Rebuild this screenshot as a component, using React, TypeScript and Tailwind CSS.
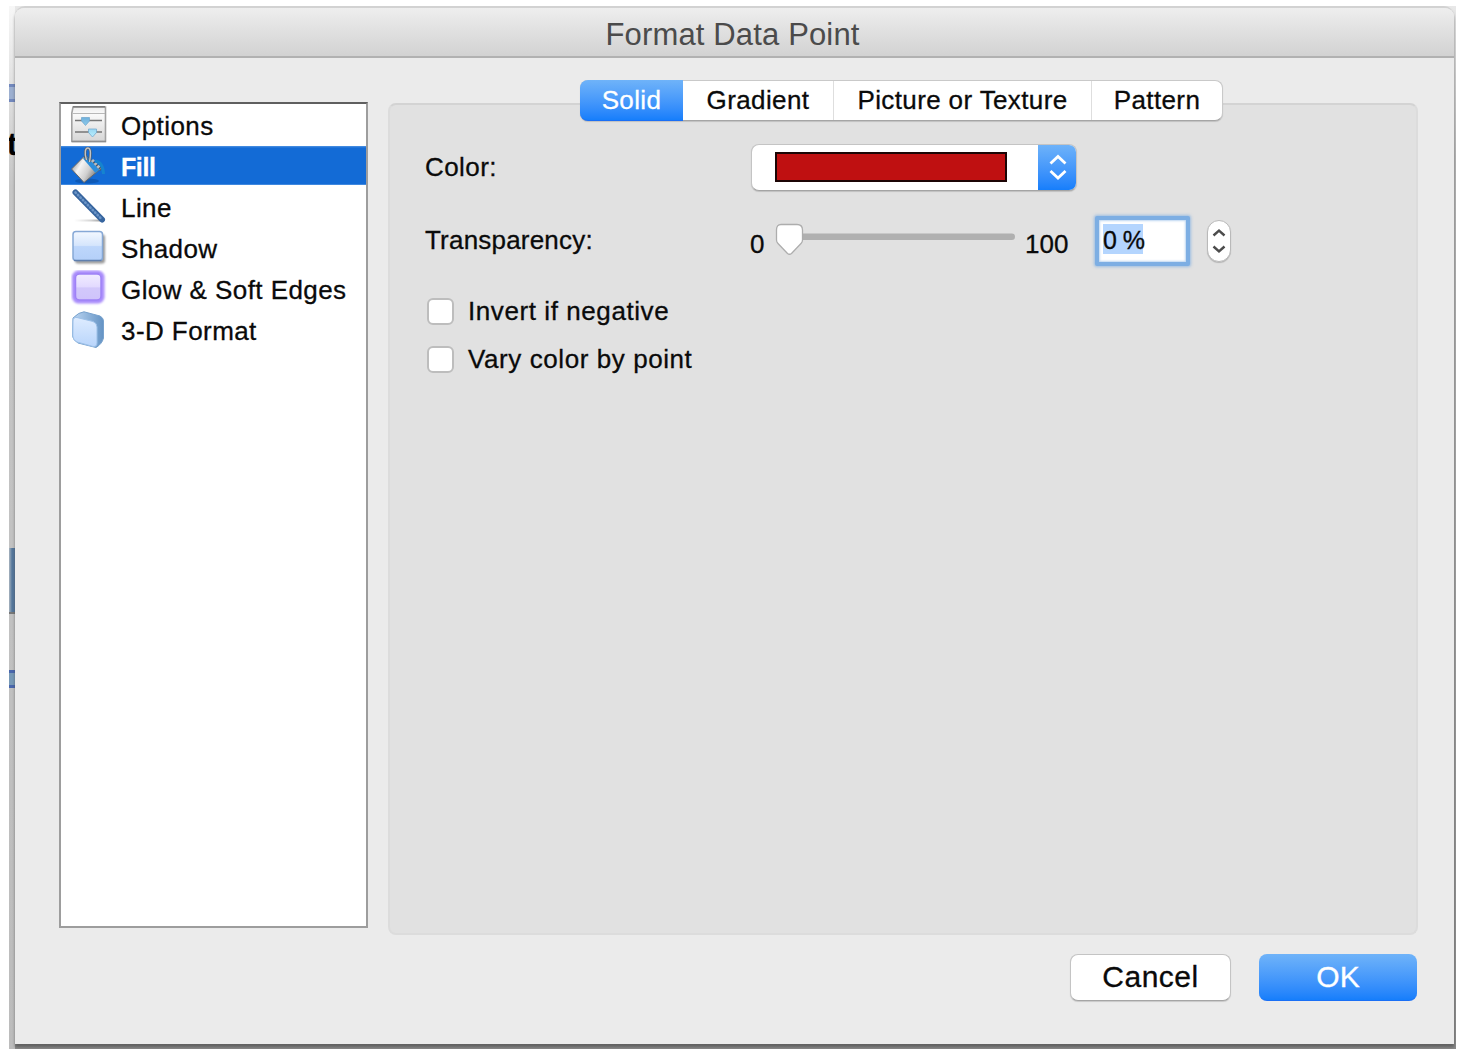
import React from "react";

function OptionsIcon() {
  return (
    <svg width="36" height="38" viewBox="0 0 36 38" className="block">
      <defs>
        <linearGradient id="opt" x1="0" y1="0" x2="0" y2="1">
          <stop offset="0" stopColor="#ececec" />
          <stop offset="0.2" stopColor="#fafafa" />
          <stop offset="1" stopColor="#d6d6d6" />
        </linearGradient>
        <linearGradient id="knob" x1="0" y1="0" x2="0" y2="1">
          <stop offset="0" stopColor="#6fb0dc" />
          <stop offset="1" stopColor="#b8f0ff" />
        </linearGradient>
      </defs>
      <path d="M2 1H34.500V35.500H.8V7z" fill="url(#opt)" stroke="#a2a2a2" strokeWidth="1.6" />
      <path d="M2 0.800H34" stroke="#7d7d7d" strokeWidth="1.6" />
      <path d="M1.500 7.500H34" stroke="#b8b8b8" strokeWidth="1" />
      <path d="M1 35.500H35" stroke="#8e8e8e" strokeWidth="1.500" />
      <path d="M4 14.500H31M4 26H31" stroke="#777" strokeWidth="1.700" />
      <path d="M10.500 11.500h8v3.500l-4 4.500-4-4.500zM17.500 23h8v3.500l-4 4.500-4-4.500z" fill="url(#knob)" stroke="#6ba3cc" strokeWidth="0.700" />
    </svg>
  );
}

function FillIcon() {
  return (
    <svg width="36" height="38" viewBox="0 0 36 38" className="block">
      <defs>
        <linearGradient id="bucket" x1="0" y1="0.200" x2="1" y2="0.700">
          <stop offset="0" stopColor="#8c8c8c" />
          <stop offset="0.300" stopColor="#f4f4f4" />
          <stop offset="0.600" stopColor="#cfcfcf" />
          <stop offset="1" stopColor="#5c5c5c" />
        </linearGradient>
      </defs>
      <ellipse cx="16" cy="34" rx="12" ry="2.500" fill="#0b4ca0" opacity="0.600" />
      <path d="M12.500 10L0.500 22L13 35.500L29.500 22z" fill="url(#bucket)" stroke="#686868" strokeWidth="1" />
      <path d="M14 9.500L30.500 22.500" stroke="#4d5a66" strokeWidth="3" />
      <path d="M12 11.500L24.500 26L28.500 22.500L16 9.500z" fill="#2b8edb" />
      <path d="M21 13L29.500 22" stroke="#b9bcc0" strokeWidth="3" strokeDasharray="2.500 1.500" />
      <path d="M15.500 13C13 5 14.500 0.800 17 1C20.500 1.500 19.500 9 18.500 15" fill="none" stroke="#4f5f70" strokeWidth="2.800" />
      <path d="M15.500 13C13 5 14.500 0.800 17 1C20.500 1.500 19.500 9 18.500 15" fill="none" stroke="#c4c4c4" strokeWidth="1.400" />
      <path d="M24 14Q32 15 32.500 27" fill="none" stroke="#1584cf" strokeWidth="3" />
    </svg>
  );
}

function LineIcon() {
  return (
    <svg width="36" height="38" viewBox="0 0 36 38" className="block">
      <defs>
        <linearGradient id="ls" x1="0" y1="0" x2="1" y2="0">
          <stop offset="0" stopColor="#bbb" stopOpacity="0" />
          <stop offset="0.600" stopColor="#aaa" stopOpacity="0.500" />
          <stop offset="1" stopColor="#999" />
        </linearGradient>
      </defs>
      <rect x="3" y="31.500" width="28" height="2" fill="url(#ls)" />
      <path d="M4.500 4.500L31 31.500" stroke="#37659f" strokeWidth="6" strokeLinecap="round" />
      <path d="M4.500 4.500L31 31.500" stroke="#6b94c6" strokeWidth="2.600" strokeLinecap="round" strokeDasharray="0.500 3" />
    </svg>
  );
}

function ShadowIcon() {
  return (
    <svg width="36" height="38" viewBox="0 0 36 38" className="block">
      <defs>
        <linearGradient id="sh" x1="0" y1="0" x2="0" y2="1">
          <stop offset="0" stopColor="#f3f8ff" />
          <stop offset="0.480" stopColor="#d5e5fc" />
          <stop offset="0.520" stopColor="#bdd6fb" />
          <stop offset="1" stopColor="#b4d0f9" />
        </linearGradient>
        <filter id="shb" x="-20%" y="-20%" width="140%" height="140%">
          <feGaussianBlur stdDeviation="1.300" />
        </filter>
      </defs>
      <rect x="4" y="5.500" width="30" height="29" rx="3" fill="#555" opacity="0.600" filter="url(#shb)" />
      <rect x="2" y="2.500" width="29.500" height="29" rx="3" fill="url(#sh)" stroke="#86a8d6" strokeWidth="1.500" />
      <path d="M3 31.500H30.500" stroke="#5f7fae" strokeWidth="1.300" />
    </svg>
  );
}

function GlowIcon() {
  return (
    <svg width="36" height="38" viewBox="0 0 36 38" className="block">
      <defs>
        <linearGradient id="gl" x1="0" y1="0" x2="0" y2="1">
          <stop offset="0" stopColor="#f1ecff" />
          <stop offset="0.480" stopColor="#e3dbff" />
          <stop offset="0.540" stopColor="#d2c8fb" />
          <stop offset="1" stopColor="#cfc3fb" />
        </linearGradient>
        <filter id="glb" x="-20%" y="-20%" width="140%" height="140%">
          <feGaussianBlur stdDeviation="0.900" />
        </filter>
      </defs>
      <rect x="2.500" y="2" width="29.500" height="30" rx="5" fill="#a98cfb" stroke="#a98cfb" strokeWidth="3" filter="url(#glb)" />
      <rect x="4.500" y="4" width="25.500" height="26" rx="4" fill="url(#gl)" stroke="#9f82f6" strokeWidth="1.500" />
    </svg>
  );
}

function FormatIcon() {
  return (
    <svg width="36" height="38" viewBox="0 0 36 38" className="block">
      <defs>
        <linearGradient id="fr" x1="0" y1="0" x2="0" y2="1">
          <stop offset="0" stopColor="#deecff" />
          <stop offset="1" stopColor="#b9d5fb" />
        </linearGradient>
        <linearGradient id="side" x1="0" y1="0" x2="1" y2="0">
          <stop offset="0" stopColor="#bcd6f2" />
          <stop offset="1" stopColor="#6493c4" />
        </linearGradient>
      </defs>
      <path d="M2 7Q8 1 13 0.800L29 5Q32.500 7 32.500 10V27Q31 33 25 36.500L7 32Q2 29 1.500 25z" fill="url(#side)" stroke="#78a2cd" strokeWidth="1" />
      <path d="M2 10Q2 6 6 6.500L22 10.500Q26 12 26 16V32Q26 36 22 35.500L6 31Q1.800 29 1.800 25z" fill="url(#fr)" stroke="#9cc0e8" strokeWidth="1" />
    </svg>
  );
}

const items = [
  { label: "Options", icon: <OptionsIcon /> },
  { label: "Fill", icon: <FillIcon /> },
  { label: "Line", icon: <LineIcon /> },
  { label: "Shadow", icon: <ShadowIcon /> },
  { label: "Glow & Soft Edges", icon: <GlowIcon /> },
  { label: "3-D Format", icon: <FormatIcon /> },
];

function Sidebar() {
  return (
    <div className="ml-11 mt-[44px] h-[826px] w-[309px] shrink-0 border-2 border-[#9d9d9d] border-t-[#5f5f5f] bg-white">
      {items.map((it, i) => (
        <div
          key={it.label}
          className={
            i === 1
              ? "flex h-[41px] items-center bg-[linear-gradient(#fff_1px,#4f93e3_1px,#136bd6_3px,#136bd6_39px,#6ba5e8_40px,#fff_40px)] pl-[10px] font-bold text-white"
              : "flex h-[41px] items-center pl-[10px]"
          }
        >
          {it.icon}
          <span className={i === 1 ? "ml-[14px] mt-[3px] text-[25px] tracking-[-0.4px]" : "ml-[14px] mt-[2px] tracking-[0.43px]"}>{it.label}</span>
        </div>
      ))}
    </div>
  );
}

function Tabs() {
  return (
    <div className="-mt-[25px] ml-[190px] flex h-[41px] w-[643px] rounded-[8px] border border-[#c9c9c9] border-b-[#a5a5a5] bg-white leading-[38px] tracking-[0.38px] shadow-[0_1px_1px_rgba(0,0,0,0.15)]">
      <div className="-my-px -ml-px w-[103px] rounded-l-[8px] border-b border-[#1a6ff5] bg-gradient-to-b from-[#6fb3f9] to-[#157efb] text-center leading-[40px] text-white">Solid</div>
      <div className="w-[151px] border-r border-[#dedede] text-center">Gradient</div>
      <div className="w-[258px] border-r border-[#dedede] text-center">Picture or Texture</div>
      <div className="flex-1 text-center">Pattern</div>
    </div>
  );
}

function ColorPopup() {
  return (
    <div className="flex h-[47px] w-[326px] overflow-hidden rounded-[8px] border border-[#c4c4c4] border-b-[#a4a4a4] bg-white shadow-[0_1px_1px_rgba(0,0,0,0.15)]">
      <div className="ml-[23px] mt-[7px] h-[30px] w-[232px] border-2 border-[#1c0505] bg-[#bf1011]" />
      <div className="-my-px -mr-px ml-auto flex w-[39px] items-center justify-center border-b border-[#1a6ff5] bg-gradient-to-b from-[#6fb3f9] to-[#157efb]">
        <svg width="18" height="28" viewBox="0 0 18 28" fill="none" stroke="white" strokeWidth="2.800">
          <path d="M1.500 10.500L9 3.500L16.500 10.500M1.500 18L9 25L16.500 18" />
        </svg>
      </div>
    </div>
  );
}

function Checkbox({ label }: { label: string }) {
  return (
    <div className="flex h-[48px] items-center">
      <div className="ml-[2px] h-[27px] w-[27px] rounded-[6px] border-2 border-[#bdbdbd] bg-white" />
      <span className="ml-[14px] tracking-[0.58px]">{label}</span>
    </div>
  );
}

function Panel() {
  return (
    <div className="ml-5 mt-[45px] h-[832px] w-[1030px] rounded-[8px] border-2 border-[#dcdcdc] border-t-[#d3d3d3] bg-[#e1e1e1]">
      <Tabs />
      <div className="ml-[35px] tracking-[0.43px]">
        <div className="mt-[23px] flex h-[47px] items-center">
          <span className="-mt-[2px] w-[326px]">Color:</span>
          <ColorPopup />
        </div>
        <div className="mt-[23px] flex h-[54px] items-center">
          <span className="-mt-[2px] w-[325px] tracking-[0.2px]">Transparency:</span>
          <span className="mt-[5px] w-[25px]">0</span>
          <svg width="242" height="36" viewBox="0 0 242 36" className="block shrink-0">
            <rect x="4" y="10.500" width="236" height="6.500" rx="3.200" fill="#b0b0b0" />
            <path d="M6 1.500H22Q27.500 1.500 27.500 7V17Q27.500 19 26 20.500L16.500 30.500Q14.500 32 12.500 30.500L3 20.500Q1.500 19 1.500 17V7Q1.500 1.500 6 1.500z" fill="white" stroke="#adadad" strokeWidth="1.300" />
          </svg>
          <span className="ml-[8px] mt-[5px] w-[70px] tracking-[0.1px]">100</span>
          <div className="flex h-[50px] w-[95px] shrink-0 items-start rounded-[2px] border-[4px] border-[#7daee3] bg-white pl-[4px] pt-[4px] shadow-[0_0_3px_1px_rgba(125,174,227,0.7),inset_0_0_2px_1px_rgba(125,174,227,0.5)]">
            <span className="h-[30px] w-[40px] whitespace-nowrap bg-[#b4d5fe] text-[25px] leading-[32px] tracking-[-0.5px]">0 %</span>
          </div>
          <div className="ml-[17px] flex h-[42px] w-[24px] shrink-0 items-center justify-center rounded-full border border-[#b9b9b9] bg-white shadow-[0_1px_1px_rgba(0,0,0,0.2)]">
            <svg width="14" height="28" viewBox="0 0 14 28" fill="none" stroke="#4c4c4c" strokeWidth="2.400">
              <path d="M1.500 8.500L7 3.500L12.500 8.500M1.500 19.500L7 24.500L12.500 19.500" />
            </svg>
          </div>
        </div>
        <div className="mt-[19px]">
          <Checkbox label="Invert if negative" />
          <Checkbox label="Vary color by point" />
        </div>
      </div>
    </div>
  );
}

function Backdrop() {
  return (
    <div className="flex h-full w-[6px] shrink-0 flex-col overflow-hidden bg-[linear-gradient(#f7f7f7_0px,#dedede_90px,#c6c6c6_180px,#bcbcbc_100%)]">
      <div className="mt-[78px] h-[18px] border-y-[3px] border-[#7288bd] bg-[#9cafd0]" />
      <div className="mt-[25px] h-[35px] -translate-x-[2px] text-[31px] font-bold leading-[35px] text-black">t</div>
      <div className="mt-[386px] h-[66px] border-b-2 border-[#777] bg-[linear-gradient(90deg,#a9b4be,#54779c_50%)]" />
      <div className="mt-[56px] h-[18px] border-y-[3px] border-[#4967ad] bg-[#7799b7]" />
    </div>
  );
}

export default function App() {
  return (
    <div className="h-[1060px] w-[1466px] overflow-hidden bg-white pl-[9px] pt-[6px] font-['Liberation_Sans',Arial,sans-serif] text-[26px] leading-none text-[#0a0a0a] [-webkit-text-stroke:0.3px_currentColor]">
      <div className="flex h-[1043px] w-[1447px] overflow-hidden bg-[linear-gradient(#e8e8e8,#b5b5b5_15%,#8a8a8a)]">
        <Backdrop />
        <div className="h-[1038px] w-[1439px] shrink-0 overflow-hidden rounded-t-[10px] border-t-2 border-[#d2d2d2] bg-[#ebebeb] shadow-[0_3px_3px_0px_rgba(70,70,70,0.6)]">
          <div className="h-[50px] border-b-2 border-[#b1b1b1] bg-gradient-to-b from-[#eeeeee] to-[#d2d2d2] text-center text-[31px] leading-[54px] tracking-[0.15px] text-[#4b4b4b] [-webkit-text-stroke:0px]">
            <span className="relative -left-[2px]">Format Data Point</span>
          </div>
          <div className="flex">
            <Sidebar />
            <Panel />
          </div>
          <div className="mt-[19px] flex h-[47px] justify-end gap-[28px] pr-[37px] text-[30px]">
            <button className="w-[161px] rounded-[8px] border border-[#c4c4c4] border-b-[#a5a5a5] bg-white pb-[2px] text-center leading-[43px] tracking-[0.5px] shadow-[0_1px_1px_rgba(0,0,0,0.15)]">Cancel</button>
            <button className="w-[158px] rounded-[8px] border-b border-[#1a6ff5] bg-gradient-to-b from-[#6fb3f9] to-[#157efb] text-center leading-[46px] text-white">OK</button>
          </div>
        </div>
      </div>
    </div>
  );
}
